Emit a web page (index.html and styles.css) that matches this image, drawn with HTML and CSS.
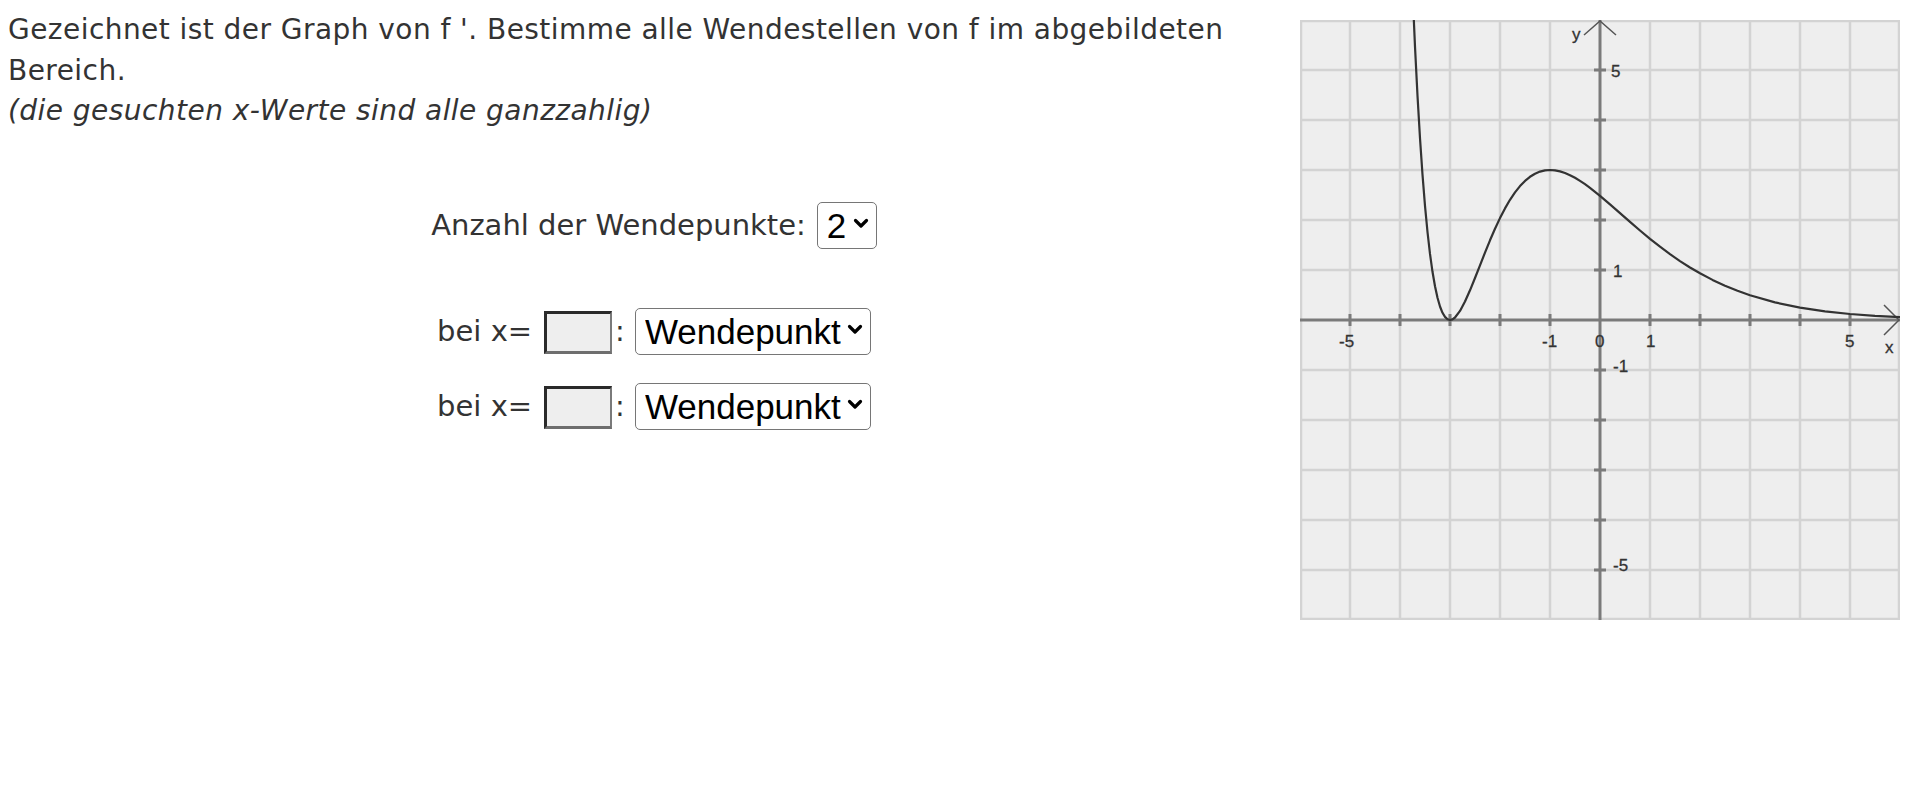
FILE: index.html
```html
<!DOCTYPE html>
<html lang="de">
<head>
<meta charset="utf-8">
<title>Wendestellen</title>
<link rel="stylesheet" href="styles.css">
</head>
<body>
<div class="page">
  <div class="task">
    <p class="intro">Gezeichnet ist der Graph von f '. Bestimme alle Wendestellen von f im abgebildeten Bereich.</p>
    <p class="hint">(die gesuchten x-Werte sind alle ganzzahlig)</p>
    <div class="form">
      <div class="row count-row">
        <span class="label">Anzahl der Wendepunkte:</span>
        <span class="selwrap">
          <select class="sel"><option>2</option><option>1</option><option>3</option></select>
          <svg class="chev" width="16" height="11" viewBox="0 0 16 11"><path d="M2.5 2.5L8 8L13.5 2.5"/></svg>
        </span>
      </div>
      <div class="row answer-row first">
        <span class="label">bei x=</span>
        <input class="xin" type="text"><span class="colon">:</span>
        <span class="selwrap">
          <select class="sel"><option>Wendepunkt</option></select>
          <svg class="chev" width="16" height="11" viewBox="0 0 16 11"><path d="M2.5 2.5L8 8L13.5 2.5"/></svg>
        </span>
      </div>
      <div class="row answer-row">
        <span class="label">bei x=</span>
        <input class="xin" type="text"><span class="colon">:</span>
        <span class="selwrap">
          <select class="sel"><option>Wendepunkt</option></select>
          <svg class="chev" width="16" height="11" viewBox="0 0 16 11"><path d="M2.5 2.5L8 8L13.5 2.5"/></svg>
        </span>
      </div>
    </div>
  </div>
  <svg class="graph" width="600" height="600" viewBox="0 0 600 600">
    <rect x="0" y="0" width="600" height="600" fill="#eeeeee"/>
    <path class="grid" d="M1 0V600M50 0V600M100 0V600M150 0V600M200 0V600M250 0V600M350 0V600M400 0V600M450 0V600M500 0V600M550 0V600M599 0V600M0 1H600M0 50H600M0 100H600M0 150H600M0 200H600M0 250H600M0 350H600M0 400H600M0 450H600M0 500H600M0 550H600M0 599H600"/>
    <path class="axis" d="M0 300H600M300 0V600"/>
    <path class="axis" d="M50 294V306M100 294V306M150 294V306M200 294V306M250 294V306M350 294V306M400 294V306M450 294V306M500 294V306M550 294V306M294 50H306M294 100H306M294 150H306M294 200H306M294 250H306M294 350H306M294 400H306M294 450H306M294 500H306M294 550H306"/>
    <path class="arrow" d="M284 15L300 1L316 15M584 285L599 300L584 315"/>
    <polyline class="curve" points="112.5,-30 115,26.6 117.5,75.7 120,118.3 122.5,154.7 125,185.8 127.5,212.0 130,233.9 132.5,251.8 135,266.3 137.5,277.8 140,286.5 142.5,292.8 145,296.9 147.5,299.3 150,300 152.5,299.4 155,297.5 160,290.9 165,281.5 170,270.3 175,258.0 180,245.3 185,232.6 190,220.3 195,208.8 200,198.1 205,188.4 210,179.8 215,172.4 220,166.1 225,160.9 230,156.8 235,153.7 240,151.6 245,150.4 250,150 255,150.4 260,151.4 265,153.0 270,155.2 275,157.8 280,160.9 285,164.2 290,167.9 295,171.8 300,175.8 310,184.3 320,193.1 330,201.9 340,210.5 350,218.8 360,226.7 370,234.2 380,241.1 390,247.5 400,253.3 412.5,259.9 425,265.7 437.5,270.8 450,275.3 475,282.4 500,287.6 525,291.4 550,294.0 575,295.9 600,297.2"/>
    <g class="labels">
      <text x="272" y="20">y</text>
      <text x="311" y="57">5</text>
      <text x="313" y="257">1</text>
      <text x="313" y="352">-1</text>
      <text x="313" y="551">-5</text>
      <text x="39" y="327">-5</text>
      <text x="242" y="327">-1</text>
      <text x="295" y="327">0</text>
      <text x="346" y="327">1</text>
      <text x="545" y="327">5</text>
      <text x="585" y="333">x</text>
    </g>
  </svg>
</div>
</body>
</html>
```

FILE: styles.css
```css
body {
  margin: 8px;
  background: #ffffff;
  color: #333333;
  font-family: "DejaVu Sans", Verdana, sans-serif;
}

.page {
  display: flex;
  align-items: flex-start;
}

.task {
  flex: none;
  width: 1292px;
}

.intro,
.hint {
  margin: 0;
  font-size: 28px;
  letter-spacing: 0.45px;
  line-height: 40.5px;
  padding-right: 40px;
}

.intro {
  margin-top: 2px;
}

.hint {
  font-style: italic;
}

.form {
  display: flex;
  flex-direction: column;
  align-items: center;
  margin-top: 70px;
  font-size: 29px;
}

.row {
  display: flex;
  align-items: center;
  height: 47px;
}

.count-row .label {
  margin-right: 11px;
}

.answer-row {
  margin-top: 28px;
}

.answer-row.first {
  margin-top: 59px;
}

.answer-row .label {
  margin-right: 12px;
}

.xin {
  box-sizing: border-box;
  width: 68px;
  height: 43px;
  margin: 2px 0 0 0;
  padding: 0;
  border-style: solid;
  border-width: 3px 2px 3px 3px;
  border-top-color: #2a2a2a;
  border-left-color: #2a2a2a;
  border-right-color: #7a7a7a;
  border-bottom-color: #6e6e6e;
  background: #eeeeee;
}

.colon {
  margin: 0 10px 0 3px;
}

.selwrap {
  position: relative;
  display: inline-flex;
}

.sel {
  -webkit-appearance: none;
  appearance: none;
  box-sizing: border-box;
  height: 47px;
  margin: 0;
  padding: 0 29px 0 9px;
  border: 1.5px solid #767676;
  border-radius: 5px;
  background: #ffffff;
  color: #000000;
  font-family: "Liberation Sans", Arial, sans-serif;
  font-size: 35px;
}

.chev {
  position: absolute;
  right: 8px;
  top: 16px;
  pointer-events: none;
}

.chev path {
  fill: none;
  stroke: #000000;
  stroke-width: 3.2;
  stroke-linecap: round;
  stroke-linejoin: round;
}

.graph {
  flex: none;
  margin-top: 12px;
  display: block;
}

.grid {
  stroke: #d3d3d3;
  stroke-width: 2.5;
  fill: none;
}

.axis {
  stroke: #7a7a7a;
  stroke-width: 3;
  fill: none;
}

.arrow {
  stroke: #555555;
  stroke-width: 1.5;
  fill: none;
}

.curve {
  stroke: #333333;
  stroke-width: 2.2;
  fill: none;
  stroke-linejoin: round;
}

.labels text {
  font-family: "Liberation Sans", Arial, sans-serif;
  font-size: 17px;
  fill: #333333;
  stroke: #333333;
  stroke-width: 0.3;
}
```
